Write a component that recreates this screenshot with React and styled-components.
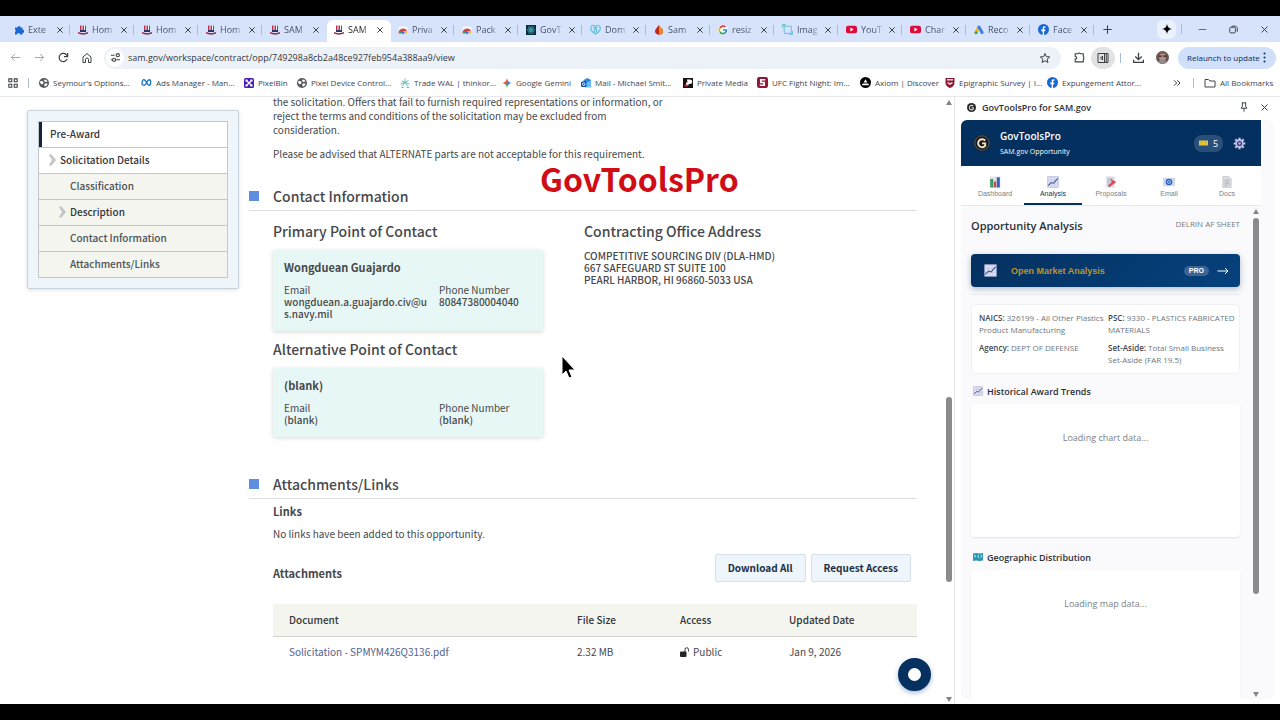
import React, { useState } from 'react'
import styled, { createGlobalStyle, css } from 'styled-components';

const sans = `"Noto Sans CJK SC", "Open Sans", sans-serif`;
const ui = `"Open Sans", "Noto Sans", sans-serif`;
const arial = `"Liberation Sans", Arial, sans-serif`;

const GlobalStyle = createGlobalStyle`
  * { box-sizing: border-box; }
  body { margin: 0; background-color: #000; }
  button, input { font: inherit; color: inherit; }
  button { border: none; background: none; padding: 0; cursor: pointer; }
  p, h1, h2, h3, h4, ul, dl, dd { margin: 0; padding: 0; }
  svg { display: block; flex: none; }
`;

const Screen = styled.div`
  display: flex;
  flex-direction: column;
  height: 100vh;
  padding: 16px 0;
  background-color: #000;
  font-family: ${ui};
`;

/* ---------- browser bars ---------- */

const TabStrip = styled.div`
  display: flex;
  align-items: center;
  height: 26px;
  padding-left: 7px;
  background-color: #d6e3fb;
`;

const Tab = styled.div`
  display: flex;
  align-items: center;
  gap: 4px;
  flex: 0 1 64px;
  min-width: 0;
  height: 22px;
  margin-top: 4px;
  padding: 0 0 3px 7px;
  color: #47536a;
  ${p => p.$active && css`
    background-color: #fff;
    color: #1f1f1f;
    border-radius: 6px 6px 0 0;
  `}
`;

const TabName = styled.span`
  flex: 1;
  min-width: 0;
  overflow: hidden;
  white-space: nowrap;
  font-size: 9px;
  line-height: 14px;
  mask-image: linear-gradient(90deg, #000 60%, transparent);
`;

const Divider = styled.span`
  flex: none;
  width: 1px;
  height: 10px;
  margin: 0 ${p => p.$gap || 0}px;
  background-color: ${p => p.$hidden ? 'transparent' : '#a9bbdc'};
`;

const IconButton = styled.button`
  display: flex;
  align-items: center;
  justify-content: center;
  flex: none;
  width: ${p => p.$w || 24}px;
  height: ${p => p.$h || 22}px;
  border-radius: ${p => p.$round || 0}px;
  background-color: ${p => p.$bg || 'transparent'};
  color: ${p => p.$color || '#3c4043'};
`;

const Spacer = styled.div`
  flex: 1;
`;

const Toolbar = styled.div`
  display: flex;
  align-items: center;
  height: 31px;
  padding: 0 4px 0 3px;
  background-color: #fff;
`;

const AddressBar = styled.div`
  display: flex;
  align-items: center;
  flex: 1;
  gap: 4px;
  height: 22px;
  margin: 0 6px 0 5px;
  padding: 0 4px 0 2px;
  border-radius: 11px;
  background-color: #edf2f9;
`;

const AddressInput = styled.input`
  flex: 1;
  min-width: 0;
  border: none;
  outline: none;
  padding: 0;
  background: transparent;
  font-size: 9px;
  line-height: 16px;
  color: #33373c;
`;

const Relaunch = styled.button`
  display: flex;
  align-items: center;
  justify-content: space-between;
  width: 98px;
  height: 22px;
  margin-left: 4px;
  padding: 0 10px 0 9px;
  border-radius: 11px;
  background-color: #d0e0fb;
  font-size: 8px;
  white-space: nowrap;
  color: #0b2b5c;
`;

const BookmarkBar = styled.nav`
  display: flex;
  align-items: center;
  height: 24px;
  padding: 0 8px 4px 8px;
  background-color: #fff;
  border-bottom: 1px solid #e6e8ec;
  font-size: 8px;
  color: #40454b;
`;

const Bookmark = styled.a`
  display: flex;
  align-items: center;
  gap: 4px;
  flex: 0 1 ${p => p.$w}px;
  min-width: 0;
  line-height: 14px;
  white-space: nowrap;
  color: inherit;
  text-decoration: none;
`;

/* ---------- page ---------- */

const Body = styled.div`
  display: flex;
  flex: 1;
  min-height: 0;
  background-color: #fff;
`;

const Page = styled.div`
  position: relative;
  display: flex;
  flex: 1;
  min-width: 0;
  overflow: hidden;
  font-family: ${sans};
  color: #47484b;
`;

const SideNav = styled.nav`
  flex: none;
  align-self: flex-start;
  width: 212px;
  margin: 13px 10px 0 27px;
  padding: 10px;
  border: 1px solid #c8d3dc;
  border-radius: 2px;
  background-color: #eff6fb;
  box-shadow: 0 1px 4px rgba(0, 0, 0, 0.12);
`;

const NavList = styled.ul`
  list-style: none;
  border: 1px solid #c3c8ca;
  border-bottom: none;
`;

const NavItem = styled.a`
  display: flex;
  align-items: center;
  height: 26px;
  padding: 0 0 2px ${p => p.$level * 10}px;
  border-bottom: 1px solid #c3c8ca;
  background-color: ${p => p.$level > 1 ? '#f4f5ef' : '#fff'};
  box-shadow: ${p => p.$current ? 'inset 3px 0 #13243f' : 'none'};
  font-size: 10px;
  font-weight: 500;
  line-height: 16px;
  color: ${p => p.$level > 1 && !p.$open ? '#4c5257' : '#33363b'};
  text-decoration: none;
`;

const NavMark = styled.span`
  width: 11px;
`;

// the page is scrolled, so the text hangs from the bottom and the top is cut off
const Main = styled.main`
  display: flex;
  flex-direction: column;
  justify-content: flex-end;
  flex: 1;
  min-width: 0;
  padding: 0 27px 36px 0;
  > * {
    flex: none;
  }
`;

const Indent = styled.div`
  padding-left: 24px;
`;

const Text = styled.p`
  max-width: 392px;
  margin-top: ${p => p.$top || 0}px;
  font-size: 10px;
  line-height: 14px;
`;

const SectionTitle = styled.h2`
  display: flex;
  align-items: center;
  gap: 14px;
  height: 28px;
  margin-top: ${p => p.$top}px;
  padding-bottom: 2px;
  border-bottom: 1px solid #dcdee0;
  font-size: 14px;
  font-weight: 500;
  line-height: 20px;
  &::before {
    content: '';
    width: 10px;
    height: 10px;
    background-color: #5f8de0;
  }
`;

const ContactGrid = styled.div`
  display: grid;
  grid-template-columns: 270px 1fr;
  gap: 41px;
  padding: 10px 0 0 24px;
`;

const SubTitle = styled.h3`
  margin-bottom: 9px;
  font-size: 14px;
  font-weight: 500;
  line-height: 20px;
`;

const ContactCard = styled.div`
  margin-bottom: 8px;
  padding: 10px 10px 11px 11px;
  border-radius: 2px;
  background-color: #e7f7f6;
  box-shadow: 0 1px 4px rgba(0, 0, 0, 0.16);
  &:last-child {
    margin-bottom: 0;
  }
`;

const Name = styled.h4`
  margin-bottom: 10px;
  font-size: 11px;
  font-weight: 700;
  line-height: 14px;
`;

const Details = styled.dl`
  display: grid;
  grid-template-columns: 145px 1fr;
  gap: 10px;
  font-size: 10px;
  line-height: 12px;
  dd {
    font-weight: 500;
    word-break: break-all;
  }
`;

const Address = styled.address`
  font-size: 10px;
  font-style: normal;
  font-weight: 500;
  line-height: 12px;
`;

const SmallTitle = styled.h3`
  padding-top: ${p => p.$top}px;
  font-size: 11px;
  font-weight: 700;
  line-height: 14px;
`;

const AttachmentBar = styled.div`
  display: flex;
  align-items: center;
  gap: 5px;
  margin: 13px 6px 22px 0;
`;

const PageButton = styled.button`
  height: 28px;
  padding: 0 12px;
  border: 1px solid #d4dfe8;
  border-radius: 2px;
  background-color: #eff6fb;
  font-size: 10px;
  font-weight: 700;
  line-height: 14px;
  color: #1c2f45;
`;

const Files = styled.table`
  width: 100%;
  table-layout: fixed;
  border-collapse: collapse;
  font-size: 10px;
  line-height: 14px;
  text-align: left;
  th, td {
    height: 32px;
    padding: 0 0 0 16px;
  }
  th {
    background-color: #f4f5ef;
    border-bottom: 1px solid #d3d5cd;
    font-weight: 500;
    color: #33363b;
  }
  a {
    color: #52608f;
    text-decoration: none;
  }
`;

const Access = styled.span`
  display: flex;
  align-items: center;
  gap: 4px;
`;

const Brand = styled.div`
  position: absolute;
  left: 540px;
  top: 59px;
  font-size: 32px;
  font-weight: 700;
  line-height: 44px;
  color: #d00d17;
`;

const Pointer = styled.svg`
  position: absolute;
  left: 561px;
  top: 258px;
`;

const ChatButton = styled.button`
  position: absolute;
  right: 13px;
  bottom: 13px;
  width: 33px;
  height: 33px;
  border: 10px solid #06305f;
  border-radius: 50%;
  background-color: #fff;
  box-shadow: 0 2px 5px rgba(0, 60, 130, 0.35);
`;

const Scroll = styled.div`
  display: flex;
  flex-direction: column;
  align-items: center;
  flex: none;
  width: 10px;
  padding: 3px 0 2px;
`;

const Track = styled.div`
  flex: ${p => p.$size};
`;

const Thumb = styled.div`
  flex: ${p => p.$size};
  width: 6px;
  border-radius: 3px;
  background-color: #8b8b8b;
`;

const Arrow = styled.div`
  width: 0;
  border: 3px solid transparent;
  border-top-width: ${p => p.$up ? 0 : 5}px;
  border-bottom-width: ${p => p.$up ? 5 : 0}px;
  border-${p => p.$up ? 'bottom' : 'top'}-color: #858585;
`;

/* ---------- side panel ---------- */

const Panel = styled.aside`
  display: flex;
  flex-direction: column;
  flex: none;
  width: 326px;
  padding: 0 6px 5px;
  border-left: 1px solid #e3e5e8;
  color: #2b2f36;
`;

const PanelTop = styled.header`
  display: flex;
  align-items: center;
  gap: 6px;
  height: 23px;
  padding: 0 2px 3px 6px;
  font-size: 9px;
  font-weight: 600;
`;

const PanelFrame = styled.div`
  display: flex;
  flex-direction: column;
  flex: 1;
  min-height: 0;
  overflow: hidden;
  border-radius: 6px;
  background-color: #fafafc;
`;

const AppHeader = styled.header`
  display: flex;
  align-items: center;
  gap: 10px;
  height: 46px;
  margin-right: 13px;
  padding: 0 15px 0 13px;
  background-color: #04305f;
  color: #fff;
`;

const AppName = styled.h1`
  font-size: 10px;
  font-weight: 600;
  line-height: 16px;
`;

const AppSub = styled.p`
  font-size: 7px;
  line-height: 15px;
`;

const Credits = styled.span`
  display: flex;
  align-items: center;
  justify-content: center;
  gap: 5px;
  width: 29px;
  height: 17px;
  border-radius: 8px;
  background-color: #28507a;
  font-size: 9px;
`;

const AppTabs = styled.nav`
  display: flex;
  flex: none;
  height: 40px;
  margin-right: 13px;
  padding: 0 5px;
  background-color: #fff;
  border-bottom: 1px solid #e7e9ec;
`;

const AppTab = styled.button`
  display: flex;
  flex-direction: column;
  align-items: center;
  gap: 2px;
  flex: 1;
  padding-top: 10px;
  border-bottom: 2px solid ${p => p.$active ? '#04305f' : 'transparent'};
  font-family: ${arial};
  font-size: 7px;
  line-height: 8px;
  color: ${p => p.$active ? '#12355f' : '#7a7f87'};
`;

const PanelBody = styled.div`
  display: flex;
  flex: 1;
  min-height: 0;
  padding-right: 13px;
`;

const PanelContent = styled.div`
  flex: 1;
  min-width: 0;
  overflow: hidden;
  padding: 10px 11px 0 10px;
`;

const AnalysisHead = styled.div`
  display: flex;
  justify-content: space-between;
  margin-bottom: 18px;
`;

const AnalysisTitle = styled.h2`
  font-size: 11px;
  font-weight: 600;
  line-height: 20px;
`;

const ItemName = styled.span`
  font-size: 8px;
  line-height: 16px;
  color: #777b82;
`;

const MarketButton = styled.button`
  display: flex;
  align-items: center;
  width: 100%;
  height: 33px;
  padding: 0 11px 0 13px;
  border-radius: 4px;
  background-image: linear-gradient(135deg, #04305f, #07427d);
  box-shadow: 0 2px 6px rgba(4, 48, 95, 0.3);
  color: #fff;
  font-family: ${arial};
  font-size: 9px;
  font-weight: 700;
`;

const MarketLabel = styled.span`
  flex: 1;
  padding-left: 14px;
  text-align: left;
  color: #b8962e;
`;

const Pro = styled.span`
  margin-right: 8px;
  padding: 0 5px;
  border-radius: 5px;
  background-color: #3a6594;
  font-size: 7px;
  line-height: 10px;
`;

const Rule = styled.hr`
  margin: 7px 0 9px;
  border: none;
  border-top: 1px solid #e7e9ed;
`;

const InfoCard = styled.div`
  display: grid;
  grid-template-columns: 125px 1fr;
  gap: 6px 4px;
  padding: 7px 0 7px 7px;
  border: 1px solid #eff0f3;
  border-radius: 5px;
  background-color: #fff;
  font-size: 8px;
  line-height: 12px;
  color: #6f757c;
  b {
    font-weight: 600;
    color: #43484f;
  }
`;

const ChartTitle = styled.h3`
  display: flex;
  align-items: center;
  gap: 4px;
  height: 20px;
  margin: ${p => p.$top}px 0 3px 2px;
  font-size: 9px;
  font-weight: 600;
`;

const ChartCard = styled.div`
  height: 133px;
  padding-top: 26px;
  border-radius: 4px;
  background-color: #fff;
  box-shadow: 0 1px 2px rgba(0, 0, 0, 0.1);
  text-align: center;
  font-size: 9px;
  line-height: 16px;
  color: #7b7f85;
`;

/* ---------- icons ---------- */

const Line = ({ size = 12, width = 2, children }) => (
  <svg width={size} height={size} viewBox="0 0 24 24" fill="none" stroke="currentColor" strokeWidth={width} aria-hidden="true">
    {children}
  </svg>
);

const Art = ({ size = 10, children }) => (
  <svg width={size} height={size} viewBox="0 0 20 20" aria-hidden="true">{children}</svg>
);

const CloseIcon = ({ size = 8, width = 3 }) => <Line size={size} width={width}><path d="M4 4l16 16M20 4L4 20" /></Line>;

const icons = {
  puzzle: <Art><path fill="#1a67d2" d="M2 5h5a3 3 0 1 1 6 0h4v5a3 3 0 1 1 0 5v4h-5a3 3 0 0 0-6 0H2v-5a3 3 0 0 0 0-5z" /></Art>,
  hat: (
    <Art>
      <path fill="#fff" d="M4 1h12v13H4z" />
      <path fill="#b5304b" d="M4 1h3v10H4zM9 1h3v10H9zM14 1h2v10h-2z" />
      <path fill="#27386b" d="M4 10h12v4H4z" />
      <path fill="#9a2440" d="M0 14c6 3 14 3 20 0v3c-6 3-14 3-20 0z" />
    </Art>
  ),
  store: (
    <Art>
      <path fill="#f4f5f8" d="M1 3h18v14H1z" />
      <path fill="#d9453c" d="M1 16a9 9 0 0 1 17-4h-8l-4 4z" />
      <path fill="#f3bd2e" d="M13 12h5l1 5h-5z" />
      <path fill="#2f9d58" d="M1 17l3-5 4 4-1 1z" />
      <circle fill="#3b6fd8" cx="10" cy="15" r="3" />
    </Art>
  ),
  react: (
    <Art>
      <path fill="#0c2d3b" d="M0 0h20v20H0z" />
      <g fill="none" stroke="#4cb7c8">
        <ellipse cx="10" cy="10" rx="8" ry="3" />
        <ellipse cx="10" cy="10" rx="8" ry="3" transform="rotate(60 10 10)" />
        <ellipse cx="10" cy="10" rx="8" ry="3" transform="rotate(120 10 10)" />
      </g>
      <circle fill="#4cb7c8" cx="10" cy="10" r="2" />
    </Art>
  ),
  heart: (
    <Art size={11}>
      <path fill="none" stroke="#52c3d9" strokeWidth="2" d="M10 18C3 14 0 9 2 5s6-3 8 0c2-3 6-4 8 0s-1 9-8 13zM6 6c5 1 8 5 5 9M14 6c-5 1-8 5-5 9" />
    </Art>
  ),
  flame: (
    <Art>
      <path fill="#c3281c" d="M10 0c-5 6-8 9-8 13 0 8 16 9 16 0 0-3-1-5-3-7-1 3-5 2-5-6z" />
      <path fill="#ef8a1f" d="M10 0c4 5 8 8 8 13 0 4-4 6-8 6z" />
    </Art>
  ),
  google: (
    <Art>
      <path fill="#fff" d="M10 0a10 10 0 1 0 .1 0z" />
      <g fill="none" strokeWidth="3.4">
        <path stroke="#e34133" d="M4 6a7 7 0 0 1 11-2" />
        <path stroke="#f2b50c" d="M4 6a7 7 0 0 0 0 8" />
        <path stroke="#34a152" d="M4 14a7 7 0 0 0 10 2" />
        <path stroke="#3f7fe8" d="M10 10h7a7 7 0 0 1-3 6" />
      </g>
    </Art>
  ),
  frame: <Art size={11}><path fill="none" stroke="#58bde2" strokeWidth="1.6" d="M4 4h13v13H4zM1 7V1h6M19 13v6h-6" /><path fill="#8ad457" d="M1 1h5v3H1z" /></Art>,
  youtube: <Art size={11}><rect fill="#e0093a" y="3" width="20" height="14" rx="4" /><path fill="#fff" d="M8 6.5l6 3.5-6 3.5z" /></Art>,
  ads: (
    <Art>
      <path stroke="#f1b417" strokeWidth="6" strokeLinecap="round" d="M9 5L4 15" />
      <path stroke="#3f7fe8" strokeWidth="6" strokeLinecap="round" d="M10 4l6 11" />
      <circle fill="#35a45a" cx="4" cy="15.500" r="3" />
    </Art>
  ),
  facebook: <Art size={11}><circle fill="#1668d8" cx="10" cy="10" r="10" /><path fill="#fff" d="M8.500 20v-7H6v-3h2.500V8c0-3 2-4 5-3.600v2.600c-2-.2-2.500.2-2.500 1.600V10h2.500l-.5 3h-2v7z" /></Art>,
  globe: <Art><circle fill="#55595f" cx="10" cy="10" r="10" /><path fill="#fff" d="M3 6c4 0 7 1 6 4s-3 1-4 3l-3-4zM11 3c4 0 5 2 6 4l-4 1-3-2zM12 11l5 0c0 3-2 5-5 6l-2-3z" /></Art>,
  meta: <Art size={11}><path fill="none" stroke="#1573c9" strokeWidth="2.400" d="M2 13C1 8 4 4 6 5c4 1 5 11 9 10 4-1 3-10 0-10-4 0-5 10-9 10-2 0-4-1-4-2z" /></Art>,
  pixelbin: <Art><rect fill="#4a1fae" width="20" height="20" rx="3" /><path stroke="#fff" strokeWidth="2.500" d="M5 5l10 10M15 5L5 15" /><path fill="#fff" d="M3 3h4v4H3zM13 3h4v4h-4zM3 13h4v4H3zM13 13h4v4h-4z" /></Art>,
  trade: <Art><path fill="none" stroke="#4fbcb3" strokeWidth="1.800" d="M10 1v8L3 6m7 3l7-4M10 9l-6 8m6-8l6 8M1 12l9-3 9 3M3 19h4m6 0h5" /></Art>,
  gemini: (
    <Art>
      <path fill="#3d83e6" d="M10 0c1 6 4 9 10 10-6 1-9 4-10 10z" />
      <path fill="#e0604c" d="M10 0C9 6 6 9 0 10h10z" />
      <path fill="#45a367" d="M0 10c6 1 9 4 10 10V10z" />
    </Art>
  ),
  outlook: <Art><path fill="#2a86dd" d="M5 4l8-4 7 4v14H5z" /><path fill="#64c2f4" d="M6 11l14-6v14H8z" /><rect fill="#0f4ea6" y="7" width="11" height="11" rx="2" /><circle fill="none" stroke="#fff" strokeWidth="1.800" cx="5.500" cy="12.500" r="2.600" /></Art>,
  media: <Art><path fill="#171313" d="M0 0h20v20H0z" /><path fill="#fff" d="M8 3h6a4 4 0 0 1 0 9h-3v3H6V9h3z" /><path fill="#d4243c" d="M3 13h6v4H3z" /></Art>,
  ufc: <Art size={11}><rect fill="#8f1737" width="20" height="20" rx="4" /><path fill="none" stroke="#fff" strokeWidth="3" d="M15 5H7v5h6v5H5" /></Art>,
  axiom: <Art size={11}><circle cx="10" cy="10" r="10" /><path fill="#fff" d="M10 4l3.500 6h-7zM5 12h10l1.500 3h-13z" /></Art>,
  shield: <Art><path fill="#8d1a35" d="M1 0h18v10c0 5-4 8-9 10-5-2-9-5-9-10z" /><path fill="#e9d9dd" d="M4 2h12v3H4zM5 8l5 2 5-2v3l-5 3-5-3z" /></Art>,
  chart: ({ size = 12 }) => (
    <Art size={size}>
      <path fill="#dcdff2" stroke="#a9aed0" d="M1 1h18v18H1z" />
      <path stroke="#bcc2e0" strokeWidth=".8" d="M1 7h18M1 13h18M7 1v18M13 1v18" />
      <path fill="none" stroke="#445a9c" strokeWidth="1.800" d="M2 16l5-5 4 1 7-8" />
    </Art>
  ),
};

const Ticket = () => (
  <svg width="9" height="6" viewBox="0 0 18 12" aria-hidden="true">
    <path fill="#e7c63f" d="M0 1h18v10H0z" />
    <path stroke="#8f8127" strokeDasharray="2 1" d="M5 1v10M13 1v10" />
  </svg>
);

const Gear = () => (
  <Art size={13}>
    <g stroke="#c5c1ee" strokeWidth="3.400">
      <path d="M10 1v18M1 10h18M3.600 3.600l12.800 12.800M16.400 3.600L3.600 16.400" />
    </g>
    <circle fill="#c5c1ee" cx="10" cy="10" r="6.500" />
    <circle fill="#2e4278" cx="10" cy="10" r="4" />
    <circle fill="#b3b0df" cx="10" cy="10" r="2" />
  </Art>
);

const Logo = ({ size }) => (
  <Art size={size}>
    <circle fill="#16191f" cx="10" cy="10" r="10" />
    <circle fill="none" stroke="#7a6e5c" strokeWidth="1" cx="10" cy="10" r="9" />
    <path fill="none" stroke="#f0e4c6" strokeWidth="2.400" d="M14 7a5 5 0 1 0 0 6.500V10.500h-4" />
  </Art>
);

const Lock = () => (
  <svg width="9" height="11" viewBox="0 0 18 22" aria-hidden="true">
    <rect fill="#222528" y="9" width="13" height="11" rx="2" />
    <path fill="none" stroke="#222528" strokeWidth="1.800" d="M10 10V5a3.500 3.500 0 0 1 7 0v4" />
  </svg>
);

const Chevron = () => (
  <svg width="8" height="12" viewBox="0 0 8 12" aria-hidden="true">
    <path fill="#c3c5c6" d="M0 1l2-1 5 6-5 6-2-1 3-5z" />
  </svg>
);

/* ---------- data ---------- */

const tabs = [
  ['Exte', 'puzzle'], ['Hom', 'hat'], ['Hom', 'hat'], ['Hom', 'hat'], ['SAM', 'hat'], ['SAM', 'hat'],
  ['Priva', 'store'], ['Pack', 'store'], ['GovT', 'react'], ['Dom', 'heart'], ['Sam', 'flame'], ['resiz', 'google'],
  ['Imag', 'frame'], ['YouT', 'youtube'], ['Char', 'youtube'], ['Reco', 'ads'], ['Face', 'facebook'],
];

const bookmarks = [
  ["Seymour's Options...", 'globe', 102], ['Ads Manager - Man...', 'meta', 103], ['PixelBin', 'pixelbin', 53],
  ['Pixel Device Control...', 'globe', 103], ['Trade WAL | thinkor...', 'trade', 102], ['Google Gemini', 'gemini', 79],
  ['Mail - Michael Smit...', 'outlook', 102], ['Private Media', 'media', 74], ['UFC Fight Night: Im...', 'ufc', 103],
  ['Axiom | Discover', 'axiom', 85], ['Epigraphic Survey | I...', 'shield', 102], ['Expungement Attor...', 'facebook', 102],
];

const sections = [
  { name: 'Pre-Award', level: 0, current: true },
  { name: 'Solicitation Details', level: 1, open: true },
  { name: 'Classification', level: 2 },
  { name: 'Description', level: 2, open: true },
  { name: 'Contact Information', level: 2 },
  { name: 'Attachments/Links', level: 2 },
];

const contacts = [
  { title: 'Primary Point of Contact', name: 'Wongduean Guajardo', email: 'wongduean.a.guajardo.civ@us.navy.mil', phone: '80847380004040' },
  { title: 'Alternative Point of Contact', name: '(blank)', email: '(blank)', phone: '(blank)' },
];

const appTabs = [
  ['Dashboard', <Art size={12}><path fill="#dfe3ec" d="M1 1h18v18H1z" /><path fill="#3a9c62" d="M2 5h5v14H2z" /><path fill="#d2474f" d="M8 9h4v10H8z" /><path fill="#3563b9" d="M13 2h5v17h-5z" /></Art>],
  ['Analysis', <icons.chart />],
  ['Proposals', <Art size={12}><path fill="#d9dbe4" d="M2 1h14v18H2z" /><path stroke="#9a9fb4" d="M4 5h9M4 8h9M4 11h5" /><path stroke="#dd4a51" strokeWidth="4" d="M6 17L17 9" /><path fill="#dd4a51" d="M9 4l8 6-5 3z" /></Art>],
  ['Email', <Art size={12}><path fill="#d4d8ea" d="M0 3h20v14H0z" /><circle fill="#2c62c4" cx="10" cy="10" r="5.500" /><circle fill="none" stroke="#b9d0f5" strokeWidth="1.400" cx="10" cy="10" r="2.500" /></Art>],
  ['Docs', <Art size={12}><path fill="#dadce1" stroke="#b7bac2" d="M3 1h10l4 4v14H3z" /><path stroke="#969aa5" d="M6 7h8M6 10h8M6 13h8M6 16h5" /></Art>],
];

function ScrollBar({ before, size, after }) {
  return (
    <Scroll aria-hidden="true">
      <Arrow $up />
      <Track $size={before} />
      <Thumb $size={size} />
      <Track $size={after} />
      <Arrow />
    </Scroll>
  )
}

function Browser() {
  const [url, setUrl] = useState('sam.gov/workspace/contract/opp/749298a8cb2a48ce927feb954a388aa9/view');
  return (
    <>
      <TabStrip>
        {tabs.map(([name, icon], i) => (
          <Tab key={i} $active={i === 5}>
            {icons[icon]}
            <TabName>{name}</TabName>
            <IconButton $w={8} $h={14} aria-label="Close tab"><CloseIcon /></IconButton>
            <Divider $gap={1} $hidden={i === 4 || i === 5} />
          </Tab>
        ))}
        <IconButton aria-label="New tab"><Line size={11} width={2.4}><path d="M12 3v18M3 12h18" /></Line></IconButton>
        <Spacer />
        <IconButton $w={19} $h={19} $round={6} $bg="#ebf2fe" $color="#000" aria-label="Gemini">
          <Art><path d="M10 0c1 6 4 9 10 10-6 1-9 4-10 10C9 14 6 11 0 10 6 9 9 6 10 0z" /></Art>
        </IconButton>
        <Divider $gap={5} />
        <IconButton $w={31} aria-label="Minimize"><Line size={9}><path d="M2 12h20" /></Line></IconButton>
        <IconButton $w={31} aria-label="Restore"><Line size={9} width={2.6}><rect x="2" y="6" width="15" height="15" rx="3" /><path d="M7 3h11l4 4v11" /></Line></IconButton>
        <IconButton $w={31} aria-label="Close"><CloseIcon size={9} width={2.6} /></IconButton>
      </TabStrip>
      <Toolbar>
        <IconButton $color="#9b9ea3" aria-label="Back"><Line size={11}><path d="M22 12H3M11 4l-8 8 8 8" /></Line></IconButton>
        <IconButton $color="#9b9ea3" aria-label="Forward"><Line size={11}><path d="M2 12h19M13 4l8 8-8 8" /></Line></IconButton>
        <IconButton aria-label="Reload"><Line size={11} width={2.6}><path d="M20 15a9 9 0 1 1-1-8l2 2" /><path d="M21 2v8h-8" /></Line></IconButton>
        <IconButton aria-label="Home"><Line size={12}><path d="M4 10l8-7 8 7v11h-5v-6a3 3 0 0 0-6 0v6H4z" /></Line></IconButton>
        <AddressBar>
          <IconButton $w={18} $h={18} $round={9} $bg="#fff" aria-label="Site information">
            <Line size={11} width={2.4}><path d="M2 7h8M18 17h4M2 17h4M14 17h8" /><circle cx="17" cy="7" r="3.500" /><circle cx="9" cy="17" r="3.500" /></Line>
          </IconButton>
          <AddressInput aria-label="Address" value={url} onChange={e => setUrl(e.target.value)} />
          <IconButton aria-label="Bookmark this tab"><Line><path d="M12 3l2.700 6.300 6.800.6-5.200 4.500 1.600 6.600-5.900-3.500L6.100 21l1.600-6.600L2.500 9.900l6.800-.6z" /></Line></IconButton>
        </AddressBar>
        <IconButton aria-label="Extensions"><Line size={13}><path d="M4 5h5a3 3 0 0 1 5 0h5v5a3 3 0 0 1 0 5v5H4v-5c4 0 4-5 0-5z" /></Line></IconButton>
        <IconButton $round={12} $bg="#e1e2e4" aria-label="Side panel"><Line size={12}><path d="M2 3h20v18H2zM15 3v18M18.500 3v18M11 8l-4 4 4 4z" /></Line></IconButton>
        <Divider $gap={5} />
        <IconButton aria-label="Downloads"><Line size={13} width={2.4}><path d="M12 3v12M6 10l6 6 6-6M3 16v5h18v-5" /></Line></IconButton>
        <IconButton aria-label="Profile">
          <Art size={13}>
            <circle fill="#6a5550" cx="10" cy="10" r="10" />
            <path fill="#b48f83" d="M5 6c2-3 8-3 10 0v6c-2 6-8 6-10 0z" />
            <path stroke="#2d2627" strokeWidth="2" d="M4 8h5M11 8h5" />
            <path fill="#8f8c90" d="M3 17c4-4 10-4 14 0-4 4-10 4-14 0z" />
          </Art>
        </IconButton>
        <Relaunch>
          Relaunch to update
          <svg width="3" height="11" viewBox="0 0 3 11" fill="currentColor"><circle cx="1.500" cy="1.500" r="1" /><circle cx="1.500" cy="5.500" r="1" /><circle cx="1.500" cy="9.500" r="1" /></svg>
        </Relaunch>
      </Toolbar>
      <BookmarkBar aria-label="Bookmarks">
        <IconButton $w={10} $h={14} aria-label="Tab groups"><Line size={10} width={2.6}><path d="M2 2h7v7H2zM15 2h7v7h-7zM2 15h7v7H2zM15 15h7v7h-7z" /></Line></IconButton>
        <Divider $gap={10} />
        {bookmarks.map(([name, icon, w]) => (
          <Bookmark key={name} href="#" $w={w}>{icons[icon]}{name}</Bookmark>
        ))}
        <Spacer />
        <IconButton $w={12} $h={14} aria-label="More bookmarks"><Line size={8} width={3}><path d="M3 4l8 8-8 8M13 4l8 8-8 8" /></Line></IconButton>
        <Divider $gap={10} />
        <Bookmark href="#" $w={68}>
          <Line size={12}><path d="M2 5h7l3 3h10v12H2z" /></Line>
          All Bookmarks
        </Bookmark>
      </BookmarkBar>
    </>
  )
}

function Opportunity() {
  return (
    <Page>
      <SideNav aria-label="Sections">
        <NavList>
          {sections.map(s => (
            <li key={s.name}>
              <NavItem href="#" $level={s.level} $current={s.current} $open={s.open}>
                <NavMark>{s.open && <Chevron />}</NavMark>
                {s.name}
              </NavItem>
            </li>
          ))}
        </NavList>
      </SideNav>
      <Main>
        <Indent>
          <Text>the solicitation. Offers that fail to furnish required representations or information, or reject the terms and conditions of the solicitation may be excluded from consideration.</Text>
          <Text $top={10}>Please be advised that ALTERNATE parts are not acceptable for this requirement.</Text>
        </Indent>
        <SectionTitle $top={22}>Contact Information</SectionTitle>
        <ContactGrid>
          <div>
            {contacts.map(c => (
              <React.Fragment key={c.title}>
                <SubTitle>{c.title}</SubTitle>
                <ContactCard>
                  <Name>{c.name}</Name>
                  <Details>
                    <div><dt>Email</dt><dd>{c.email}</dd></div>
                    <div><dt>Phone Number</dt><dd>{c.phone}</dd></div>
                  </Details>
                </ContactCard>
              </React.Fragment>
            ))}
          </div>
          <div>
            <SubTitle>Contracting Office Address</SubTitle>
            <Address>
              COMPETITIVE SOURCING DIV (DLA-HMD)<br />
              667 SAFEGUARD ST SUITE 100<br />
              PEARL HARBOR, HI 96860-5033 USA
            </Address>
          </div>
        </ContactGrid>
        <SectionTitle $top={34}>Attachments/Links</SectionTitle>
        <Indent>
          <SmallTitle $top={5}>Links</SmallTitle>
          <Text $top={9}>No links have been added to this opportunity.</Text>
          <AttachmentBar>
            <SmallTitle $top={10}>Attachments</SmallTitle>
            <Spacer />
            <PageButton>Download All</PageButton>
            <PageButton>Request Access</PageButton>
          </AttachmentBar>
          <Files>
            <colgroup>
              <col />
              <col width="103" />
              <col width="109" />
              <col width="144" />
            </colgroup>
            <thead>
              <tr><th>Document</th><th>File Size</th><th>Access</th><th>Updated Date</th></tr>
            </thead>
            <tbody>
              <tr>
                <td><a href="#">Solicitation - SPMYM426Q3136.pdf</a></td>
                <td>2.32 MB</td>
                <td><Access><Lock />Public</Access></td>
                <td>Jan 9, 2026</td>
              </tr>
            </tbody>
          </Files>
        </Indent>
      </Main>
      <Brand>GovToolsPro</Brand>
      <Pointer width="15" height="24" viewBox="0 0 15 24" aria-hidden="true">
        <path stroke="#fff" strokeWidth="1" d="M1 1v19l4-4 3 7 3-1-3-7h6z" />
      </Pointer>
      <ChatButton aria-label="Open chat" />
    </Page>
  )
}

function SidePanel() {
  return (
    <Panel>
      <PanelTop>
        <Logo size={9} />
        GovToolsPro for SAM.gov
        <Spacer />
        <IconButton $w={15} $h={16} aria-label="Pin"><Line size={10} width={2.4}><path d="M7 2h10M8 2v9l-3 4h14l-3-4V2M12 15v8" /></Line></IconButton>
        <IconButton $w={15} $h={16} aria-label="Close panel"><CloseIcon size={9} width={2.6} /></IconButton>
      </PanelTop>
      <PanelFrame>
        <AppHeader>
          <Logo size={16} />
          <div>
            <AppName>GovToolsPro</AppName>
            <AppSub>SAM.gov Opportunity</AppSub>
          </div>
          <Spacer />
          <Credits><Ticket />5</Credits>
          <IconButton $w={13} aria-label="Settings"><Gear /></IconButton>
        </AppHeader>
        <AppTabs>
          {appTabs.map(([name, icon]) => (
            <AppTab key={name} $active={name === 'Analysis'}>{icon}{name}</AppTab>
          ))}
        </AppTabs>
        <PanelBody>
          <PanelContent>
            <AnalysisHead>
              <AnalysisTitle>Opportunity Analysis</AnalysisTitle>
              <ItemName>DELRIN AF SHEET</ItemName>
            </AnalysisHead>
            <MarketButton>
              <icons.chart size={13} />
              <MarketLabel>Open Market Analysis</MarketLabel>
              <Pro>PRO</Pro>
              <Line size={12}><path d="M1 12h21M16 6l6 6-6 6" /></Line>
            </MarketButton>
            <Rule />
            <InfoCard>
              <div><b>NAICS:</b> 326199 - All Other Plastics Product Manufacturing</div>
              <div><b>PSC:</b> 9330 - PLASTICS FABRICATED MATERIALS</div>
              <div><b>Agency:</b> DEPT OF DEFENSE</div>
              <div><b>Set-Aside:</b> Total Small Business Set-Aside (FAR 19.5)</div>
            </InfoCard>
            <ChartTitle $top={7}><icons.chart size={10} />Historical Award Trends</ChartTitle>
            <ChartCard>Loading chart data...</ChartCard>
            <ChartTitle $top={10}>
              <Art size={10}><path fill="#2a94b5" d="M0 3l6-1 7 1 7-1v15l-7 1-7-1-6 1z" /><path fill="#7ed0c9" d="M2 6l4-1v5l-3 2zM9 5l3 1v7l-3-2zM15 6l3-1v6l-3 2z" /></Art>
              Geographic Distribution
            </ChartTitle>
            <ChartCard>Loading map data...</ChartCard>
          </PanelContent>
          <ScrollBar before={4} size={374} after={98} />
        </PanelBody>
      </PanelFrame>
    </Panel>
  )
}

export default function App() {
  return (
    <Screen>
      <GlobalStyle />
      <Browser />
      <Body>
        <Opportunity />
        <ScrollBar before={290} size={184} after={114} />
        <SidePanel />
      </Body>
    </Screen>
  )
}
